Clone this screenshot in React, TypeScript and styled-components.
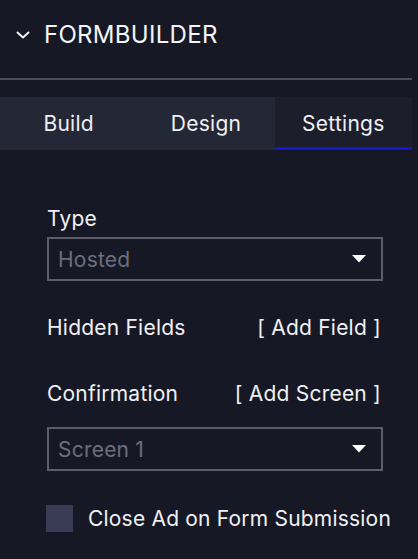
import React from "react";
import styled, { createGlobalStyle } from "styled-components";

const Global = createGlobalStyle`
  html, body { margin: 0; padding: 0; background: #161925; }
  body { font-family: Inter, "Noto Sans", sans-serif; color: #f1f1f4; }
  * { box-sizing: border-box; }
`;

const Panel = styled.div`
  width: 412px;
  min-height: 559px;
  background: #161925;
`;

const Header = styled.div`
  height: 69px;
  display: flex;
  align-items: center;
  padding-left: 16px;
  gap: 14px;
`;

const Title = styled.span`
  font-size: 24px;
  font-weight: 400;
  letter-spacing: 0.3px;
  color: #f4f4f6;
`;

const Divider = styled.div`
  margin-top: 9px;
  height: 2px;
  background: #4b4e58;
`;

const Tabs = styled.div`
  margin-top: 17px;
  display: grid;
  grid-template-columns: repeat(3, 1fr);
  height: 53px;
  background: #242735;
`;

const Tab = styled.div<{ $active?: boolean }>`
  display: flex;
  align-items: center;
  justify-content: center;
  font-size: 21px;
  letter-spacing: 0.25px;
  color: #f0f0f3;
  background: ${(p) => (p.$active ? "#1c1f2b" : "transparent")};
  border-bottom: 3px solid ${(p) => (p.$active ? "#1414d6" : "transparent")};
  padding-top: 3px;
`;

const Content = styled.div`
  padding: 57px 0 0 47px;
  width: 412px;
`;

const Label = styled.div`
  font-size: 21px;
  letter-spacing: 0.22px;
  line-height: 24px;
  color: #f1f1f4;
`;

const Select = styled.div<{ $mt: number }>`
  margin-top: ${(p) => p.$mt}px;
  width: 336px;
  height: 44px;
  border: 2px solid #5b5e6a;
  display: flex;
  align-items: center;
  justify-content: space-between;
  padding: 0 15px 0 9px;
  font-size: 21px;
  letter-spacing: 0.22px;
  color: #6c6f7c;
`;

const Row = styled.div<{ $mt: number }>`
  margin-top: ${(p) => p.$mt}px;
  width: 334px;
  display: flex;
  justify-content: space-between;
  align-items: center;
`;

const Action = styled.span`
  font-size: 21px;
  letter-spacing: 0.22px;
  line-height: 24px;
  color: #f1f1f4;
`;

const CheckRow = styled.label`
  margin-top: 34px;
  display: flex;
  align-items: center;
  gap: 15px;
  margin-left: -1px;
  white-space: nowrap;
`;

const Box = styled.span`
  width: 27px;
  height: 27px;
  flex: none;
  background: #3a3b55;
  display: inline-block;
`;

const CheckText = styled.span`
  font-size: 21px;
  letter-spacing: 0.2px;
  color: #f1f1f4;
`;

const Chevron = () => (
  <svg width="14" height="8" viewBox="0 0 14 8" style={{ marginTop: 1 }}>
    <path d="M1.5 1.5 L7 6.5 L12.5 1.5" fill="none" stroke="#f1f1f4" strokeWidth="2" strokeLinecap="round" strokeLinejoin="round" />
  </svg>
);

const Caret = () => (
  <svg width="14" height="8" viewBox="0 0 14 8">
    <path d="M0 0 H14 L7 7.5 Z" fill="#ffffff" />
  </svg>
);

export default function App() {
  return (
    <Panel>
      <Global />
      <Header>
        <Chevron />
        <Title>FORMBUILDER</Title>
      </Header>
      <Divider />
      <Tabs>
        <Tab>Build</Tab>
        <Tab>Design</Tab>
        <Tab $active>Settings</Tab>
      </Tabs>
      <Content>
        <Label>Type</Label>
        <Select $mt={6}>
          <span>Hosted</span>
          <Caret />
        </Select>
        <Row $mt={35}>
          <Label>Hidden Fields</Label>
          <Action>[ Add Field ]</Action>
        </Row>
        <Row $mt={42}>
          <Label>Confirmation</Label>
          <Action>[ Add Screen ]</Action>
        </Row>
        <Select $mt={21}>
          <span>Screen 1</span>
          <Caret />
        </Select>
        <CheckRow>
          <Box />
          <CheckText>Close Ad on Form Submission</CheckText>
        </CheckRow>
      </Content>
    </Panel>
  );
}
